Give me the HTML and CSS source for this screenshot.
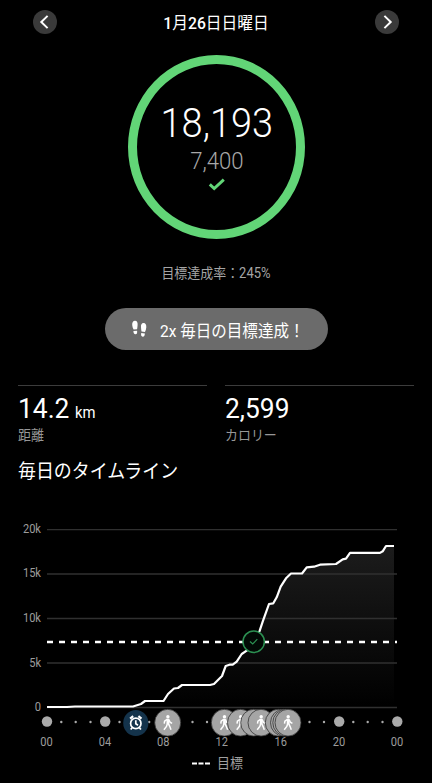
FILE: index.html
```html
<!DOCTYPE html>
<html lang="ja">
<head>
  <meta charset="UTF-8">
  <meta name="viewport" content="width=device-width, initial-scale=1.0">
  <title>歩数</title>
  <link rel="stylesheet" href="styles.css">
</head>
<body>
  <header class="date-bar">
    <button class="nav" aria-label="前の日">
      <svg width="24" height="24" viewBox="0 0 24 24"><path d="M14.600 5.900L8.300 12l6.300 6.100"/></svg>
    </button>
    <h1 class="date narrow"><b>1</b>月<b>26</b>日日曜日</h1>
    <button class="nav" aria-label="次の日">
      <svg width="24" height="24" viewBox="0 0 24 24"><path d="M9.400 5.900L15.700 12l-6.300 6.100"/></svg>
    </button>
  </header>

  <section class="ring">
    <div class="steps narrow">18,193</div>
    <div class="goal narrow">7,400</div>
    <svg class="check" width="18" height="13" viewBox="0 0 18 13"><path d="M1.800 6.400l4.400 4.200L15.800 1.600"/></svg>
  </section>

  <p class="rate"><span class="narrow">目標達成率：245%</span></p>

  <div class="pill">
    <svg width="16" height="18" viewBox="0 0 16 18">
      <path d="M1.200 5C1 2.200 2.200.6 4.100.7c1.900.1 2.700 1.800 2.500 4.200-.1 1.600-.3 3-.5 4.400l-3.500.3C1.900 8.200 1.300 6.700 1.200 5zM2.400 11l3.700-.3c.3 2.400-.2 3.500-1.600 3.500-1.400.1-2.100-1.100-2.100-3.200z"/>
      <path d="M15.300 7.300c.2-2.800-.9-4.400-2.800-4.300-1.900.1-2.700 1.800-2.500 4.200.1 1.600.3 2.900.5 4.300l3.500.4c.7-1.500 1.200-2.900 1.300-4.600zM13.900 13.400l-3.700-.4c-.4 2.400.1 3.500 1.500 3.700 1.300.1 2.100-1.200 2.200-3.300z"/>
    </svg>
    <span class="narrow">2x 毎日の目標達成！</span>
  </div>

  <section class="stats">
    <div class="stat">
      <div class="value narrow">14.2<span class="unit">km</span></div>
      <div class="label narrow">距離</div>
    </div>
    <div class="stat">
      <div class="value narrow">2,599</div>
      <div class="label narrow">カロリー</div>
    </div>
  </section>

  <h2 class="title"><span class="narrow">毎日のタイムライン</span></h2>

  <svg class="chart" width="432" height="240" viewBox="0 510 432 240">
    <defs>
      <linearGradient id="fill" x1="0" y1="0" x2="0" y2="1">
        <stop offset="0" stop-color="#1c1c1c"/>
        <stop offset="1" stop-color="#000"/>
      </linearGradient>
      <g id="walk">
        <ellipse class="walk-bg" rx="13" ry="13.400"/>
        <circle class="walk-head" cx=".2" cy="-6" r="1.700"/>
        <path class="walk-body" d="M-1.200-3.900L1.500-3.900 1.600 1.600-1.200 1.600z"/>
        <path class="walk-limb" d="M-.6-3.300L-3.100-1.500-3.500 1M1.100-3.200L2.300-.6 4.400.6M-.4 1.200L-1.200 3.700-3.800 7M.8 1.200L2 3.600 3.300 7"/>
      </g>
    </defs>

    <path fill="url(#fill)" d="M47 707H67L75 706.500H133L141 704L145 701H163.500L168 694L174 688.500L178 688L182 685H210L214 684L222 676L225.700 666L229.500 664.700H232.700L236.700 661.700L241.700 654L246.700 650.700L253.700 641.700L259.700 630.700L262.700 621.700L269 604L273.300 603.300L276.700 597.300L280.700 586.700L286 578.300L291 573.500H302L306.700 567.300L314 566.700L320 564.700L336 564L342.700 559.300L346 558.700L350 552.900H380L382.700 551.300L386 546H394V707Z"/>

    <!-- grid -->
    <path class="grid" d="M47 529.700H397M47 574H397M47 618.500H397M47 663H397M47 707.500H397"/>
    <path class="target" d="M47 642H397"/>
    <path class="line" d="M47 707H67L75 706.500H133L141 704L145 701H163.500L168 694L174 688.500L178 688L182 685H210L214 684L222 676L225.700 666L229.500 664.700H232.700L236.700 661.700L241.700 654L246.700 650.700L253.700 641.700L259.700 630.700L262.700 621.700L269 604L273.300 603.300L276.700 597.300L280.700 586.700L286 578.300L291 573.500H302L306.700 567.300L314 566.700L320 564.700L336 564L342.700 559.300L346 558.700L350 552.900H380L382.700 551.300L386 546H394"/>

    <!-- goal reached -->
    <circle class="goal-badge" cx="253.700" cy="641.700" r="10.700"/>
    <path class="goal-check" d="M250 641.500l2.700 2.500 4.600-4.800"/>

    <g class="axis y">
      <text transform="translate(41 533) scale(.925 1)">20k</text>
      <text transform="translate(41 577.300) scale(.925 1)">15k</text>
      <text transform="translate(41 622) scale(.925 1)">10k</text>
      <text transform="translate(41 666.500) scale(.925 1)">5k</text>
      <text transform="translate(41 711) scale(.925 1)">0</text>
    </g>

    <g class="dots">
      <circle cx="47" cy="721.500" r="5.200"/>
      <circle cx="61.300" cy="722" r="1.200"/>
      <circle cx="75.700" cy="722" r="1.200"/>
      <circle cx="90.500" cy="722" r="1.200"/>
      <circle cx="105.200" cy="721.500" r="5.200"/>
      <circle cx="119.500" cy="722" r="1.200"/>
      <circle cx="149.200" cy="722" r="1.200"/>
      <circle cx="192.500" cy="722" r="1.200"/>
      <circle cx="207" cy="722" r="1.200"/>
      <circle cx="309.500" cy="722" r="1.200"/>
      <circle cx="324" cy="722" r="1.200"/>
      <circle cx="339.200" cy="721.500" r="5.200"/>
      <circle cx="353.300" cy="722" r="1.200"/>
      <circle cx="367.700" cy="722" r="1.200"/>
      <circle cx="382.500" cy="722" r="1.200"/>
      <circle cx="397.300" cy="721.500" r="5.200"/>
    </g>

    <g class="axis x">
      <text transform="translate(46.500 745.700) scale(.925 1)">00</text>
      <text transform="translate(105 745.700) scale(.925 1)">04</text>
      <text transform="translate(163.300 745.700) scale(.925 1)">08</text>
      <text transform="translate(221.700 745.700) scale(.925 1)">12</text>
      <text transform="translate(280.700 745.700) scale(.925 1)">16</text>
      <text transform="translate(339 745.700) scale(.925 1)">20</text>
      <text transform="translate(397 745.700) scale(.925 1)">00</text>
    </g>

    <!-- wake up -->
    <g class="alarm" transform="translate(135.800 723)">
      <ellipse class="alarm-bg" rx="12.600" ry="13"/>
      <circle cy=".4" r="5.200"/>
      <path d="M0-2.700V.7L2.200 2.300M-3.700 4.700l-1.400 1.900M3.700 4.700l1.400 1.900"/>
      <path class="bell" d="M-5.700-4.400l3.100-2.400M5.700-4.400l-3.100-2.400"/>
    </g>

    <use href="#walk" x="167.700" y="722.700"/>
    <use href="#walk" x="224.300" y="722.700"/>
    <use href="#walk" x="240.500" y="722.700"/>
    <use href="#walk" x="253.700" y="722.700"/>
    <use href="#walk" x="261" y="722.700"/>
    <use href="#walk" x="278.300" y="722.700"/>
    <use href="#walk" x="283.500" y="722.700"/>
    <use href="#walk" x="285.800" y="722.700"/>
    <use href="#walk" x="288" y="722.700"/>
  </svg>

  <div class="legend">
    <svg width="18" height="3" viewBox="0 0 18 3"><path d="M0 1.500H5M6.500 1.500H11.500M13 1.500H18"/></svg>
    <span class="narrow">目標</span>
  </div>
</body>
</html>
```

FILE: styles.css
```css
* { box-sizing: border-box; }
body { width: 432px; height: 783px; margin: 0; overflow: hidden; background: #000; color: #fff; font-family: Roboto, "Noto Sans CJK JP", sans-serif; }
h1, h2, p { margin: 0; font-weight: 400; }
svg { display: block; flex: none; }

/* condensed glyphs */
.narrow { display: inline-block; white-space: nowrap; transform: scaleX(.925); transform-origin: center; }

.date-bar { display: flex; align-items: center; justify-content: space-between; height: 44px; padding: 0 33px; }
.date { font-size: 17px; line-height: 24px; padding-top: 2px; }
.date b { font-weight: 500; }
.nav { width: 24px; height: 24px; padding: 0; border: 0; border-radius: 50%; background: #3a3a3a; }
.nav path { fill: none; stroke: #fff; stroke-width: 2; }

.ring { display: flex; flex-direction: column; align-items: center; width: 177px; height: 184px; margin: 10.500px 0 0 128px; padding-top: 35.500px; border: 9px solid #62d577; border-radius: 50%; }
.steps { font-size: 41px; line-height: 48px; font-weight: 350; }
.goal { font-size: 24px; line-height: 28px; font-weight: 350; color: #a8a8a8; }
.check { margin-top: 2.500px; }
.check path { fill: none; stroke: #62d577; stroke-width: 2.900; }

.rate { height: 20px; margin-top: 24.500px; font-size: 14px; line-height: 20px; color: #a5a5a5; text-align: center; }

.pill { display: flex; align-items: center; width: 223px; height: 42px; margin: 25px 0 0 105px; padding-left: 26px; gap: 13px; border-radius: 21px; background: #6b6b6b; font-size: 16.800px; line-height: 24px; }
.pill path { fill: #fff; }
.pill .narrow { margin-top: 4px; transform-origin: left; }

.stats { display: flex; gap: 18px; margin: 35px 18px 0; }
.stat { flex: 1; height: 65px; padding-top: 7px; border-top: 1.500px solid #3c3c3c; }
.stat .narrow { display: block; transform-origin: left; }
.value { height: 32px; font-size: 28.500px; line-height: 32px; }
.unit { margin-left: 6px; font-size: 16px; }
.label { height: 20px; font-size: 14px; line-height: 20px; color: #979797; }

.title { height: 28px; margin: 8px 0 0 18px; font-size: 19.400px; line-height: 28px; }
.title .narrow { transform-origin: left; }

.chart { margin-top: 24px; }
.grid { stroke: #303030; stroke-width: 1.300; }
.target { stroke: #fff; stroke-width: 2.300; stroke-dasharray: 6 6; }
.line { fill: none; stroke: #fff; stroke-width: 2.200; stroke-linejoin: round; }
.goal-badge { fill: #020a05; stroke: #2c9152; stroke-width: 1.500; }
.goal-check { fill: none; stroke: #2c9152; stroke-width: 1.200; }
.axis text { font-size: 12px; fill: #9c9c9c; }
.axis.x text { text-anchor: middle; }
.axis.y text { text-anchor: end; }
.dots { fill: #aaa; }
.walk-bg { fill: #a5a5a5; stroke: #333; stroke-width: .8; }
.walk-head, .walk-body { fill: #fff; }
.walk-limb { fill: none; stroke: #fff; stroke-width: 1.500; }
.alarm { fill: none; stroke: #fff; stroke-width: 1.700; }
.alarm .bell { stroke-width: 2.200; }
.alarm .alarm-bg { fill: #14334b; stroke: none; }

.legend { display: flex; align-items: center; height: 26px; padding-left: 191.500px; gap: 6px; font-size: 14px; line-height: 20px; color: #a0a0a0; }
.legend path { stroke: #fff; stroke-width: 2.200; }
```
